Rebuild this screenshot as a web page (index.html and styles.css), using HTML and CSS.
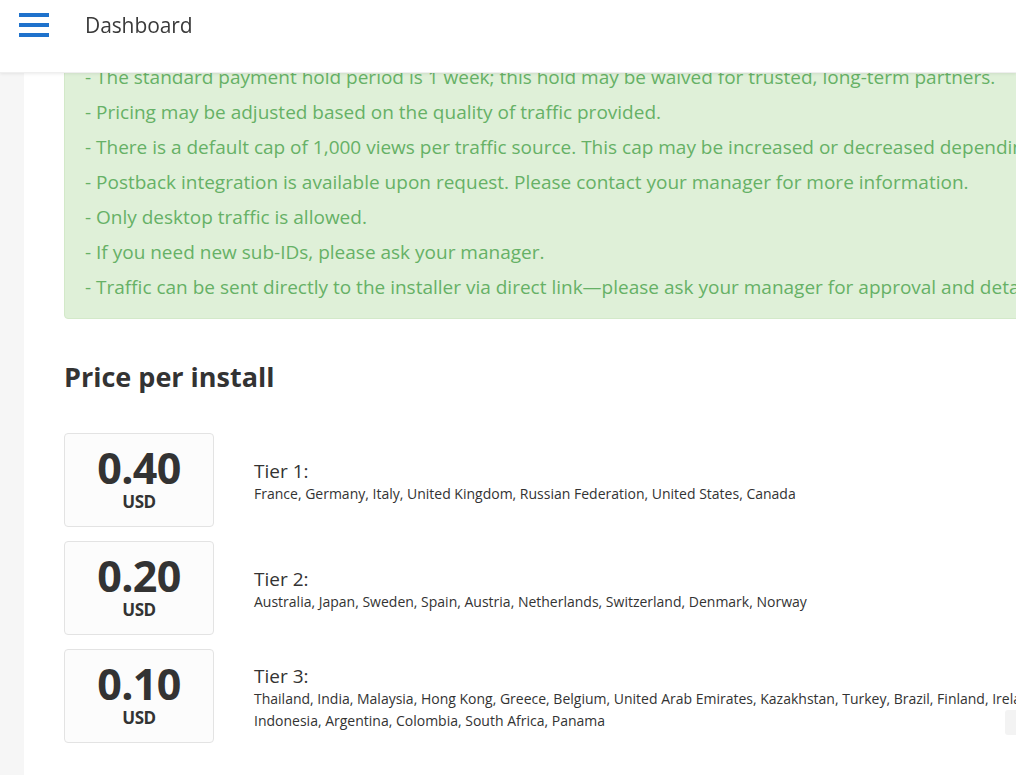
FILE: index.html
```html
<!DOCTYPE html>
<html lang="en">
<head>
<meta charset="utf-8">
<title>Dashboard</title>
<link rel="stylesheet" href="styles.css">
</head>
<body>
<header class="topbar">
  <button class="menu-btn" aria-label="Menu">
    <span class="bar"></span><span class="bar"></span><span class="bar"></span>
  </button>
  <h1 class="title">Dashboard</h1>
</header>
<div class="layout">
  <aside class="sidebar"></aside>
  <main class="main">
    <div class="alert">
      <div class="alert-line">- The standard payment hold period is 1 week; this hold may be waived for trusted, long-term partners.</div>
      <div class="alert-line">- Pricing may be adjusted based on the quality of traffic provided.</div>
      <div class="alert-line">- There is a default cap of 1,000 views per traffic source. This cap may be increased or decreased depending on traffic quality.</div>
      <div class="alert-line">- Postback integration is available upon request. Please contact your manager for more information.</div>
      <div class="alert-line">- Only desktop traffic is allowed.</div>
      <div class="alert-line">- If you need new sub-IDs, please ask your manager.</div>
      <div class="alert-line">- Traffic can be sent directly to the installer via direct link—please ask your manager for approval and details.</div>
    </div>

    <h2 class="section-title">Price per install</h2>

    <div class="tiers">
      <div class="tier">
        <div class="price-card">
          <div class="price">0.40</div>
          <div class="currency">USD</div>
        </div>
        <div class="tier-info">
          <div class="tier-name">Tier 1:</div>
          <div class="tier-countries">France, Germany, Italy, United Kingdom, Russian Federation, United States, Canada</div>
        </div>
      </div>
      <div class="tier">
        <div class="price-card">
          <div class="price">0.20</div>
          <div class="currency">USD</div>
        </div>
        <div class="tier-info">
          <div class="tier-name">Tier 2:</div>
          <div class="tier-countries">Australia, Japan, Sweden, Spain, Austria, Netherlands, Switzerland, Denmark, Norway</div>
        </div>
      </div>
      <div class="tier">
        <div class="price-card">
          <div class="price">0.10</div>
          <div class="currency">USD</div>
        </div>
        <div class="tier-info">
          <div class="tier-name">Tier 3:</div>
          <div class="tier-countries">Thailand, India, Malaysia, Hong Kong, Greece, Belgium, United Arab Emirates, Kazakhstan, Turkey, Brazil, Finland, Ireland, Israel, Poland, Portugal, Mexico,<br>Indonesia, Argentina, Colombia, South Africa, Panama</div>
        </div>
      </div>
    </div>
  </main>
</div>
<div class="edge-tab"></div>
</body>
</html>
```

FILE: styles.css
```css
* { box-sizing: border-box; }
html, body {
  margin: 0;
  padding: 0;
  width: 1016px;
  height: 775px;
  overflow: hidden;
  background: #ffffff;
  font-family: "Open Sans", "Noto Sans", sans-serif;
  color: #333333;
}
.topbar {
  position: fixed;
  top: 0;
  left: 0;
  right: 0;
  height: 73px;
  background: #ffffff;
  box-shadow: 0 1px 3px rgba(0,0,0,0.08);
  border-bottom: 1px solid #efefef;
  display: flex;
  align-items: center;
  z-index: 10;
}
.menu-btn {
  width: 30px;
  height: 24px;
  margin-left: 19px;
  margin-top: -23px;
  padding: 0;
  border: 0;
  background: transparent;
  display: flex;
  flex-direction: column;
  justify-content: space-between;
}
.bar {
  display: block;
  width: 30px;
  height: 4px;
  background: #1f72cc;
}
.title {
  margin: -23px 0 0 36px;
  font-size: 21px;
  font-weight: 400;
  color: #3a3a3a;
  letter-spacing: -0.1px;
}
.layout {
  display: flex;
  width: 1400px;
  min-height: 775px;
}
.sidebar {
  width: 24px;
  flex: none;
  background: #f6f6f6;
}
.main {
  padding: 44px 0 0 40px;
  width: 1376px;
}
.alert {
  background: #dff0d8;
  border: 1px solid #d3e9c9;
  border-radius: 4px;
  padding: 15px 20px 13px 20px;
  color: #66b166;
  font-size: 19px;
  line-height: 35px;
  white-space: nowrap;
  width: 1240px;
}
.section-title {
  margin: 39px 0 0 0;
  font-size: 27px;
  font-weight: 700;
  color: #333333;
  line-height: 38px;
}
.tiers {
  margin-top: 37px;
  display: flex;
  flex-direction: column;
  gap: 14px;
}
.tier {
  display: flex;
  align-items: center;
}
.price-card {
  width: 150px;
  height: 94px;
  flex: none;
  background: #fcfcfc;
  border: 1px solid #e3e3e3;
  border-radius: 4px;
  display: flex;
  flex-direction: column;
  align-items: center;
  justify-content: center;
}
.price {
  font-size: 43px;
  font-weight: 700;
  line-height: 44px;
  color: #333333;
  letter-spacing: -0.6px;
  margin-top: -3px;
}
.currency {
  font-size: 17px;
  font-weight: 700;
  line-height: 20px;
  color: #333333;
  letter-spacing: -0.5px;
  margin-top: 2px;
}
.tier-info {
  margin-left: 40px;
  padding-top: 3px;
}
.tier-name {
  font-size: 19px;
  line-height: 24px;
  color: #333333;
}
.tier-countries {
  font-size: 14px;
  line-height: 22px;
  color: #333333;
  white-space: nowrap;
}
.edge-tab {
  position: fixed;
  left: 1005px;
  top: 710px;
  width: 11px;
  height: 25px;
  background: #f3f3f3;
  border-radius: 3px 0 0 3px;
}
```
